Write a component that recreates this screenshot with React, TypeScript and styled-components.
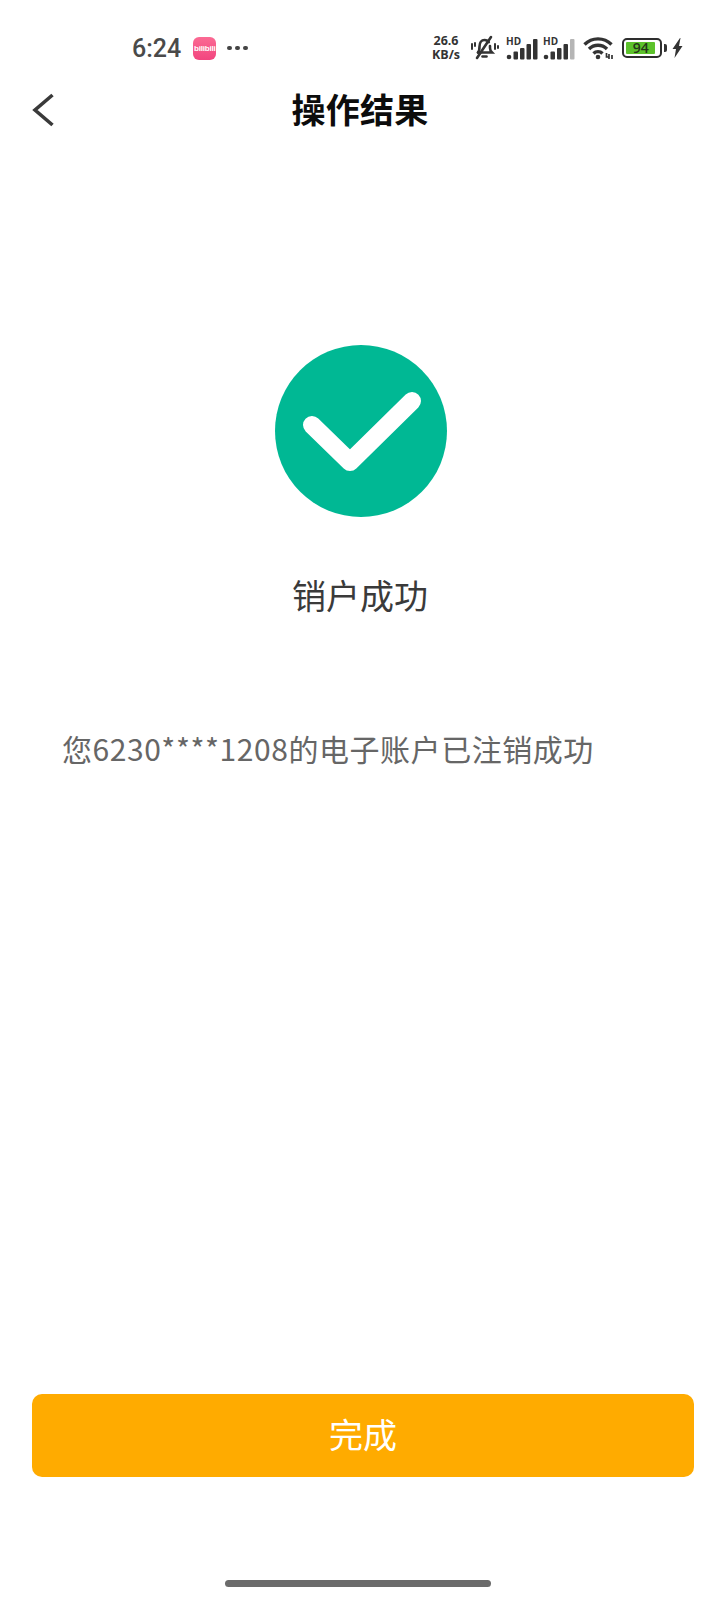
import React from "react";
import styled, { createGlobalStyle } from "styled-components";

const GlobalStyle = createGlobalStyle`
  html, body {
    margin: 0;
    padding: 0;
    background: #fff;
  }
  * {
    box-sizing: border-box;
  }
`;

const Page = styled.div`
  width: 720px;
  height: 1600px;
  display: flex;
  flex-direction: column;
  background: #fff;
  font-family: "Noto Sans CJK SC", "Noto Sans", sans-serif;
  overflow: hidden;
`;

const StatusBar = styled.div`
  height: 74px;
  padding: 22px 37px 0 132px;
  display: flex;
  align-items: center;
  justify-content: space-between;
`;

const StatusLeft = styled.div`
  display: flex;
  align-items: center;
`;

const Clock = styled.span`
  padding-top: 2px;
  font-family: "Roboto", sans-serif;
  font-size: 25px;
  line-height: 30px;
  font-weight: 500;
  color: #4a4a4a;
`;

const AppBadge = styled.div`
  width: 23px;
  height: 23px;
  margin-left: 12px;
  border-radius: 6px;
  background: linear-gradient(180deg, #fb6a93, #f2457f);
  display: flex;
  align-items: center;
  justify-content: center;
  color: #fff;
  font-family: "Liberation Sans", sans-serif;
  font-size: 8px;
  font-weight: 700;
  letter-spacing: -0.2px;
  overflow: hidden;
`;

const Dots = styled.div`
  display: flex;
  gap: 3.5px;
  margin-left: 11px;
`;

const Dot = styled.i`
  width: 4.5px;
  height: 4.5px;
  border-radius: 50%;
  background: #444;
`;

const StatusRight = styled.div`
  display: flex;
  align-items: center;
  color: #333;
`;

const Speed = styled.div`
  width: 32px;
  margin-right: 7px;
  font-family: "Open Sans", sans-serif;
  font-size: 12.5px;
  line-height: 14px;
  font-weight: 700;
  text-align: center;
  white-space: nowrap;
  color: #333;
`;

const IconSlot = styled.div<{ $left: number }>`
  display: flex;
  margin-left: ${(p) => p.$left}px;
`;

const Battery = styled.div`
  width: 40px;
  height: 20px;
  margin-left: 9px;
  padding: 2px;
  border: 2.5px solid #2e2e2e;
  border-radius: 5px;
  display: flex;
`;

const BatteryFill = styled.div`
  width: 92%;
  background: #5cc22b;
  border-radius: 1px;
  display: flex;
  align-items: center;
  justify-content: center;
  font-family: "Open Sans", sans-serif;
  font-size: 14px;
  line-height: 12px;
  font-weight: 600;
  color: #25361a;
`;

const BatteryCap = styled.div`
  width: 3px;
  height: 8px;
  margin-left: 2px;
  margin-right: 5px;
  border-radius: 0 2px 2px 0;
  background: #333;
`;

const Nav = styled.div`
  height: 70px;
  display: grid;
  grid-template-columns: 120px 1fr 120px;
  align-items: center;
`;

const BackButton = styled.div`
  padding: 2px 0 0 31px;
  display: flex;
  align-items: center;
`;

const Title = styled.h1`
  margin: 0;
  text-align: center;
  font-size: 34px;
  line-height: 48px;
  letter-spacing: 0.2px;
  font-weight: 700;
  color: #0c0c0c;
`;

const Main = styled.main`
  flex: 1;
  display: flex;
  flex-direction: column;
  align-items: center;
  padding-top: 201px;
`;

const SuccessSlot = styled.div`
  display: flex;
  margin-left: 1px;
`;

const ResultText = styled.div`
  margin-top: 54px;
  font-size: 34px;
  line-height: 48px;
  color: #3a3a3a;
`;

const Message = styled.p`
  align-self: stretch;
  margin: 107px 0 0;
  padding-left: 62px;
  font-size: 30px;
  line-height: 44px;
  letter-spacing: 0.55px;
  color: #666;
`;

const Footer = styled.div`
  padding: 0 26px 0 32px;
`;

const DoneButton = styled.button`
  width: 100%;
  height: 83px;
  padding: 0 0 3px;
  border: 0;
  border-radius: 10px;
  background: #ffab00;
  color: #fff;
  font-family: inherit;
  font-size: 34px;
  line-height: 48px;
`;

const HomeArea = styled.div`
  height: 123px;
  padding-bottom: 13px;
  display: flex;
  align-items: flex-end;
  justify-content: center;
`;

const HomeBar = styled.div`
  width: 266px;
  height: 7px;
  margin-left: -4px;
  border-radius: 4px;
  background: #6b6b6b;
`;

const MutedBell = () => (
  <svg width="30" height="26" viewBox="0 0 30 26" fill="none" stroke="#333" strokeWidth="2.6" strokeLinecap="round">
    <path d="M9 17.500c1.500-1.500 1.500-3 1.500-6 0-4 2-6.500 5-6.500 2 0 3.500 .8 4.300 2.200" />
    <path d="M21 11v2c0 2 1 3.500 2 4.500H9" />
    <path d="M13.500 21.500h4" />
    <path d="M22 2 8 23" />
    <path d="M3 9v5M6 8v3M26 9v5M29 11v2" strokeWidth="2" />
  </svg>
);

const Signal = ({ weak }: { weak?: boolean }) => (
  <svg width="32" height="26" viewBox="0 0 32 26">
    <text x="0" y="10" fontFamily="Open Sans, sans-serif" fontSize="10" fontWeight="700" fill="#333">
      HD
    </text>
    <circle cx="3" cy="22" r="2.300" fill="#333" />
    <rect x="7.500" y="16.500" width="4.500" height="8" rx="1" fill="#333" />
    <rect x="14" y="13" width="4.500" height="11.500" rx="1" fill="#333" />
    <rect x="20.500" y="9" width="4.500" height="15.500" rx="1" fill="#333" />
    <rect x="27" y="4" width="4.500" height="20.500" rx="1" fill={weak ? "#b5b5b5" : "#333"} />
  </svg>
);

const Wifi = () => (
  <svg width="30" height="24" viewBox="0 0 30 24" fill="none" stroke="#333" strokeWidth="3.400">
    <path d="M1.500 8.500C9 1 21 1 28.500 8.500" />
    <path d="M6 13c5-5 13-5 18 0" />
    <path d="M10.500 17.500c2.500-2.500 6.500-2.500 9 0" />
    <circle cx="15" cy="21" r="2.300" fill="#333" stroke="none" />
    <path d="M23.500 17v4h3M26 18v5M29 19v4" strokeWidth="1.700" />
  </svg>
);

const Bolt = () => (
  <svg width="11" height="20" viewBox="0 0 11 20">
    <path d="M8 0 .5 11h3.500L2.500 20 10.500 8H7L8.500 0z" fill="#333" />
  </svg>
);

const BackIcon = () => (
  <svg width="24" height="34" viewBox="0 0 24 34" fill="none" stroke="#3a3a3a" strokeWidth="3.600">
    <path d="M21.500 2 4 17l17.500 15" />
  </svg>
);

const SuccessIcon = () => (
  <svg width="172" height="172" viewBox="0 0 172 172">
    <circle cx="86" cy="86" r="86" fill="#00b894" />
    <path d="M37 80 75 117 137 56" fill="none" stroke="#fff" strokeWidth="18" strokeLinecap="round" strokeLinejoin="round" />
  </svg>
);

export default function App() {
  return (
    <Page>
      <GlobalStyle />
      <StatusBar>
        <StatusLeft>
          <Clock>6:24</Clock>
          <AppBadge>bilibili</AppBadge>
          <Dots>
            <Dot />
            <Dot />
            <Dot />
          </Dots>
        </StatusLeft>
        <StatusRight>
          <Speed>
            26.6
            <br />
            KB/s
          </Speed>
          <MutedBell />
          <IconSlot $left={7}>
            <Signal />
          </IconSlot>
          <IconSlot $left={5}>
            <Signal weak />
          </IconSlot>
          <IconSlot $left={8}>
            <Wifi />
          </IconSlot>
          <Battery>
            <BatteryFill>94</BatteryFill>
          </Battery>
          <BatteryCap />
          <Bolt />
        </StatusRight>
      </StatusBar>
      <Nav>
        <BackButton>
          <BackIcon />
        </BackButton>
        <Title>操作结果</Title>
      </Nav>
      <Main>
        <SuccessSlot>
          <SuccessIcon />
        </SuccessSlot>
        <ResultText>销户成功</ResultText>
        <Message>您6230****1208的电子账户已注销成功</Message>
      </Main>
      <Footer>
        <DoneButton>完成</DoneButton>
      </Footer>
      <HomeArea>
        <HomeBar />
      </HomeArea>
    </Page>
  );
}
